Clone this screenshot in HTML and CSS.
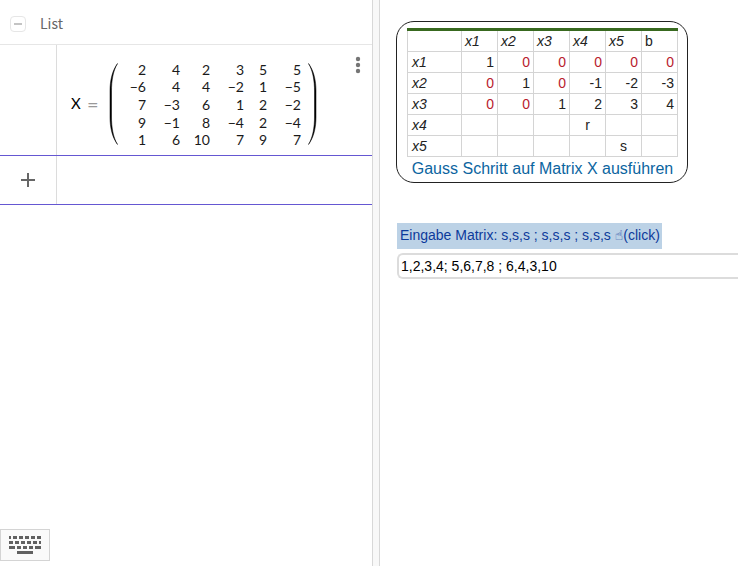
FILE: index.html
```html
<!DOCTYPE html>
<html lang="de">
<head>
<meta charset="utf-8">
<title>Gauss Schritt</title>
<link rel="stylesheet" href="styles.css">
</head>
<body>
<main class="app">
  <section class="algebra">
    <header class="group">
      <button class="collapse" type="button" aria-label="List"><svg width="16" height="16" viewBox="0 0 16 16"><path d="M4 8h8" stroke="#c4c4c4" stroke-width="2"/></svg></button>
      <h2 class="group-title">List</h2>
    </header>
    <div class="row row-list">
      <div class="marble"></div>
      <div class="expression">
        <span class="name">X</span><span class="equals">=</span>
        <svg class="paren" width="9" height="82" viewBox="0 0 9 82"><path d="M8.500 .5C3 8 1 18 1 28V54C1 64 3 74 8.500 81.500C4 74 2.500 64 2.500 54V28C2.500 18 4 8 8.500 .5Z" fill="#000" stroke="#000" stroke-width=".5"/></svg>
        <table class="matrix">
          <tr><td>2</td><td>4</td><td>2</td><td>3</td><td>5</td><td>5</td></tr>
          <tr><td>−6</td><td>4</td><td>4</td><td>−2</td><td>1</td><td>−5</td></tr>
          <tr><td>7</td><td>−3</td><td>6</td><td>1</td><td>2</td><td>−2</td></tr>
          <tr><td>9</td><td>−1</td><td>8</td><td>−4</td><td>2</td><td>−4</td></tr>
          <tr><td>1</td><td>6</td><td>10</td><td>7</td><td>9</td><td>7</td></tr>
        </table>
        <svg class="paren" width="9" height="82" viewBox="0 0 9 82"><path d="M.5 .5C6 8 8 18 8 28V54C8 64 6 74 .5 81.500C5 74 6.500 64 6.500 54V28C6.500 18 5 8 .5 .5Z" fill="#000" stroke="#000" stroke-width=".5"/></svg>
      </div>
      <button class="more" type="button" aria-label="Mehr"><svg width="6" height="18" viewBox="0 0 6 18" fill="#757575"><circle cx="3" cy="3" r="2.200"/><circle cx="3" cy="9" r="2.200"/><circle cx="3" cy="15" r="2.200"/></svg></button>
    </div>
    <div class="row row-new">
      <button class="marble add" type="button" aria-label="Neu"><svg width="14" height="14" viewBox="0 0 14 14"><path d="M0 7h14M7 0v14" stroke="#666" stroke-width="2"/></svg></button>
    </div>
    <button class="keyboard" type="button" aria-label="Tastatur">
      <svg width="34" height="20" viewBox="0 0 34 20" stroke="#616161" stroke-width="3"><path d="M1 2.500h2M5 2.500h4M11 2.500h4M17 2.500h4M23 2.500h4M29 2.500h4M1 7.500h4M7 7.500h4M13 7.500h4M19 7.500h4M25 7.500h4M31 7.500h2M1 12.500h6M9 12.500h4M15 12.500h4M21 12.500h4M27 12.500h6M9 17.500h16"/></svg>
    </button>
  </section>
  <div class="splitter"></div>
  <section class="graphics">
    <div class="card">
      <table class="tableau">
        <tr><th class="label"></th><th>x1</th><th>x2</th><th>x3</th><th>x4</th><th>x5</th><th class="plain">b</th></tr>
        <tr><th>x1</th><td>1</td><td class="zero">0</td><td class="zero">0</td><td class="zero">0</td><td class="zero">0</td><td class="zero">0</td></tr>
        <tr><th>x2</th><td class="zero">0</td><td>1</td><td class="zero">0</td><td>-1</td><td>-2</td><td>-3</td></tr>
        <tr><th>x3</th><td class="zero">0</td><td class="zero">0</td><td>1</td><td>2</td><td>3</td><td>4</td></tr>
        <tr><th>x4</th><td></td><td></td><td></td><td class="mid">r</td><td></td><td></td></tr>
        <tr><th>x5</th><td></td><td></td><td></td><td></td><td class="mid">s</td><td></td></tr>
      </table>
      <button class="step" type="button">Gauss Schritt auf Matrix X ausführen</button>
    </div>
    <label class="prompt" for="entry">Eingabe Matrix: s,s,s ; s,s,s ; s,s,s <span class="hand">☝</span>(click)</label>
    <input class="entry" id="entry" type="text" value="1,2,3,4; 5,6,7,8 ; 6,4,3,10">
  </section>
</main>
</body>
</html>
```
FILE: styles.css
```css
* { box-sizing: border-box; }
body { margin: 0; background: #fff; }
button { margin: 0; padding: 0; border: 0; background: none; font: inherit; }
svg { display: block; }

.app {
  display: grid;
  grid-template-columns: 372fr 8px 358fr;
  height: calc(100vh - 2px);
  margin-right: 2px;
  overflow: hidden;
  font-family: "Liberation Sans", Arial, sans-serif;
}

.algebra {
  display: flex;
  flex-direction: column;
  min-width: 0;
  font-family: Lato, "Noto Sans", sans-serif;
}
.group {
  display: flex;
  align-items: center;
  gap: 14px;
  height: 45px;
  padding: 4px 10px 0;
  border-bottom: 1px solid #e6e6e6;
}
.collapse {
  display: flex;
  width: 16px;
  height: 16px;
  outline: 1px solid #e6e6e6;
  outline-offset: -1px;
  border-radius: 4px;
}
.group-title {
  margin: 0;
  padding-bottom: 2px;
  font-family: "Noto Sans CJK SC", "Noto Sans", sans-serif;
  font-size: 14px;
  line-height: 18px;
  font-weight: 400;
  color: #666;
}
.row { display: flex; }
.row-list { height: 110px; }
.row-new {
  height: 50px;
  border: solid #6557d2;
  border-width: 1px 0;
}
.marble {
  flex: none;
  width: 57px;
  border-right: 1px solid #dcdcdc;
}
.add {
  display: flex;
  align-items: center;
  justify-content: center;
}
.expression {
  display: flex;
  flex: 1;
  align-items: center;
  padding: 8px 0 0 14px;
  font-size: 14px;
  line-height: 16px;
}
.name { width: 10px; padding-bottom: 2px; font-size: 15px; }
.equals { width: 12px; margin: 0 10px 0 6px; font-size: 20px; color: #999; }
.paren { flex: none; }
.matrix {
  height: 88px;
  margin: 2px 7px 0 0;
  border-collapse: collapse;
  table-layout: fixed;
  color: #1a1a1a;
}
.matrix td {
  width: 34px;
  padding: 0;
  text-align: right;
  white-space: nowrap;
}
.matrix td:nth-child(1) { width: 28px; }
.matrix td:nth-child(3) { width: 30px; }
.matrix td:nth-child(5) { width: 23px; }
.more {
  align-self: flex-start;
  margin: 11px 11px 0 0;
}
.keyboard {
  display: flex;
  align-items: center;
  justify-content: center;
  width: 50px;
  height: 32px;
  margin: auto 0 5px;
  border: 1px solid #d4d4d4;
  background: #fafafa;
}

.splitter {
  border: solid #d8d8d8;
  border-width: 0 1px;
  background: #f8f8f8;
}

.graphics {
  display: flex;
  flex-direction: column;
  align-items: flex-start;
  min-width: 0;
  padding: 21px 0 0 16px;
}
.card {
  padding: 6px 9px 1px 10px;
  border: 1px solid #222;
  border-radius: 18px;
}
.tableau {
  border-collapse: collapse;
  border-top: 3px solid #38691f;
  font-size: 14px;
  line-height: 20px;
  color: #222;
}
.tableau th, .tableau td {
  width: 36px;
  height: 21px;
  padding: 0 3px;
  border: 1px solid #d4d4d4;
  text-align: right;
}
.tableau tr:first-child th { border-top: 3px solid #38691f; }
.tableau th {
  font-style: italic;
  font-weight: 400;
  text-align: left;
}
.tableau th:first-child { width: 54px; padding-left: 4px; }
.tableau .plain { font-style: normal; }
.tableau .zero { color: #b8202f; }
.tableau .mid { text-align: center; }
.step {
  display: block;
  width: 100%;
  font-size: 16px;
  line-height: 24px;
  color: #0b659f;
  text-align: center;
  white-space: nowrap;
}
.prompt {
  margin: 40px 0 0 1px;
  padding: 0 2px 2px 3px;
  background: #bcd2e6;
  color: #0c3a9b;
  font-size: 14px;
  line-height: 24px;
  white-space: nowrap;
}
.hand { font-family: "DejaVu Sans", sans-serif; font-size: 14px; line-height: 1; }
.entry {
  align-self: stretch;
  height: 26px;
  margin: 4px 0 0 1px;
  padding: 0 2px;
  border: 2px solid #dcdcdc;
  border-right: 0;
  border-radius: 6px 0 0 6px;
  font: 14px "Liberation Sans", Arial, sans-serif;
  color: #000;
}
```
